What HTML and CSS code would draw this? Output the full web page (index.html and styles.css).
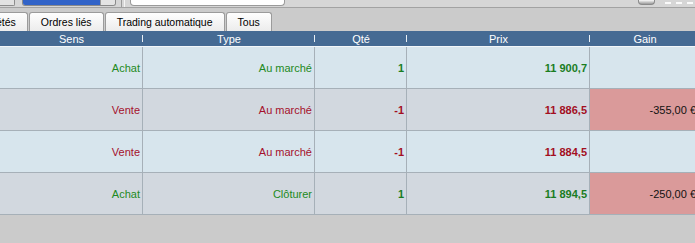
FILE: index.html
```html
<!DOCTYPE html>
<html lang="fr">
<head>
<meta charset="utf-8">
<title>Ordres</title>
<link rel="stylesheet" href="styles.css">
</head>
<body>
<div class="page">
  <div class="toolbar">
    <div class="tb-box"></div>
    <div class="tb-select"><div class="tb-sel-val"></div><div class="tb-sel-btn"></div></div>
    <div class="tb-sep"></div>
    <div class="tb-input"></div>
    <div class="tb-spacer"></div>
    <div class="tb-btn"></div>
    <div class="tb-dashes"><span></span><span></span><span></span></div>
  </div>
  <div class="tabs">
    <div class="tab">Propriétés</div>
    <div class="tab">Ordres liés</div>
    <div class="tab">Trading automatique</div>
    <div class="tab">Tous</div>
  </div>
  <div class="grid">
    <div class="row head">
      <div class="c c1">Sens</div>
      <div class="c c2">Type</div>
      <div class="c c3">Qté</div>
      <div class="c c4">Prix</div>
      <div class="c c5">Gain</div>
    </div>
    <div class="row odd">
      <div class="c c1 buy">Achat</div>
      <div class="c c2 buy">Au marché</div>
      <div class="c c3 buy num">1</div>
      <div class="c c4 buy num">11 900,7</div>
      <div class="c c5"></div>
    </div>
    <div class="row even">
      <div class="c c1 sell">Vente</div>
      <div class="c c2 sell">Au marché</div>
      <div class="c c3 sell num">-1</div>
      <div class="c c4 sell num">11 886,5</div>
      <div class="c c5 loss">-355,00 €</div>
    </div>
    <div class="row odd">
      <div class="c c1 sell">Vente</div>
      <div class="c c2 sell">Au marché</div>
      <div class="c c3 sell num">-1</div>
      <div class="c c4 sell num">11 884,5</div>
      <div class="c c5"></div>
    </div>
    <div class="row even">
      <div class="c c1 buy">Achat</div>
      <div class="c c2 buy">Clôturer</div>
      <div class="c c3 buy num">1</div>
      <div class="c c4 buy num">11 894,5</div>
      <div class="c c5 loss">-250,00 €</div>
    </div>
  </div>
</div>
</body>
</html>
```
FILE: styles.css
```css
html, body {
  margin: 0;
  padding: 0;
  background: #cbcbcb;
  overflow: hidden;
}
.page {
  width: 695px;
  height: 243px;
  overflow: hidden;
  font-family: "Liberation Sans", Arial, sans-serif;
  font-size: 11px;
  background: #cbcbcb;
}
.toolbar {
  height: 7px;
  background: #d6d6d6;
  border-bottom: 1px solid #a2a2a2;
  display: flex;
  align-items: flex-start;
}
.tb-box {
  width: 14px;
  height: 5px;
  background: #e2e2e2;
  border-right: 1px solid #8c8c8c;
  border-bottom: 1px solid #8c8c8c;
  border-bottom-right-radius: 2px;
}
.tb-select {
  margin-left: 7px;
  display: flex;
  height: 5px;
  border: 1px solid #8a8a8a;
  border-top: none;
  border-radius: 0 0 3px 3px;
  overflow: hidden;
}
.tb-sel-val {
  width: 77px;
  background: #3163c8;
  border-right: 1px solid #9a9a9a;
}
.tb-sel-btn {
  width: 14px;
  background: #e4e4e4;
}
.tb-sep {
  width: 2px;
  height: 7px;
  margin-left: 5px;
  border-left: 1px solid #9a9a9a;
  border-right: 1px solid #f4f4f4;
}
.tb-input {
  margin-left: 5px;
  width: 153px;
  height: 5px;
  background: #fff;
  border: 1px solid #9a9a9a;
  border-top: none;
  border-radius: 0 0 4px 4px;
}
.tb-spacer { flex: 1; }
.tb-btn {
  width: 15px;
  height: 4px;
  border: 1px solid #8a8a8a;
  border-top: none;
  border-radius: 0 0 4px 4px;
  background: linear-gradient(#fafafa, #9a9a9a);
}
.tb-dashes {
  display: flex;
  gap: 5px;
  margin: 2px 2px 0 10px;
}
.tb-dashes span {
  width: 6px;
  height: 2px;
  background: #fafafa;
}
.tabs {
  height: 23px;
  display: flex;
  align-items: flex-end;
  gap: 1px;
  margin-left: -44px;
}
.tab {
  height: 18px;
  line-height: 18px;
  padding: 0 11px;
  font-size: 10.5px;
  color: #000;
  background: linear-gradient(#fefefe, #ececec);
  border: 1px solid #9b9b9b;
  border-bottom: none;
  border-radius: 3px 3px 0 0;
  white-space: nowrap;
}
.grid {
  display: flex;
  flex-direction: column;
}
.row {
  display: flex;
  height: 41px;
  border-bottom: 1px solid #a6b0b8;
}
.row.head {
  height: 15px;
  background: #456a93;
  border-bottom: 1px solid #f2f6f9;
  color: #fff;
}
.row.odd { background: #d7e5ed; }
.row.even { background: #d2d8df; }
.c {
  display: flex;
  align-items: center;
  justify-content: flex-end;
  padding-right: 2px;
  border-right: 1px solid #a6b0b8;
  box-sizing: border-box;
  white-space: nowrap;
  flex: none;
}
.c1 { width: 143px; }
.c2 { width: 172px; }
.c3 { width: 92px; }
.c4 { width: 183px; }
.c5 { width: 108px; border-right: none; }
.head .c {
  justify-content: center;
  padding-right: 0;
  border-right: none;
  position: relative;
}
.head .c5 { width: 110px; }
.head .c1::after, .head .c2::after, .head .c3::after, .head .c4::after {
  content: "";
  position: absolute;
  right: 0;
  top: 4px;
  width: 1px;
  height: 7px;
  background: #e8eef4;
}
.buy { color: #1d8a22; }
.sell { color: #a5102c; }
.num { font-weight: bold; }
.buy.num { color: #1a7d1f; }
.sell.num { color: #a30f1f; }
.loss {
  background: #da9a9a;
  color: #111;
}
```
